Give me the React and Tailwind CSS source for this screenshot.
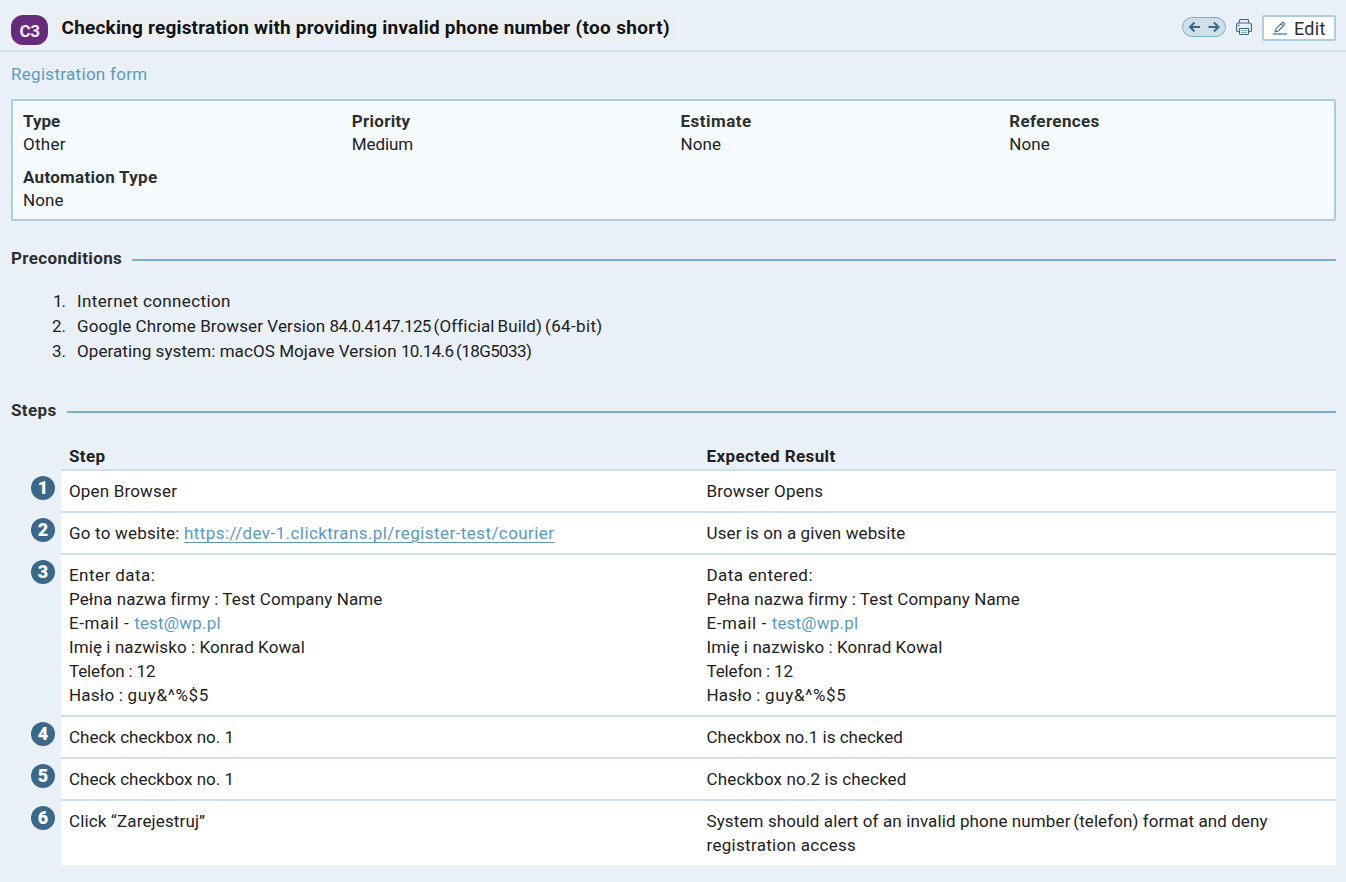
import React from "react";

const details = [
  { label: "Type", value: "Other", labelClass: "", valueClass: "tracking-[0.3px]" },
  { label: "Priority", value: "Medium", labelClass: "tracking-[0.3px]", valueClass: "tracking-[-0.1px]" },
  { label: "Estimate", value: "None", labelClass: "tracking-[0.5px]", valueClass: "tracking-[0.1px]" },
  { label: "References", value: "None", labelClass: "tracking-[0.38px]", valueClass: "tracking-[0.1px]" },
  { label: "Automation Type", value: "None", labelClass: "tracking-[0.28px]", valueClass: "tracking-[0.1px]" },
];

const preconditions = [
  <span className="tracking-[0.38px]">Internet connection</span>,
  <>
    <span className="tracking-[0.1px]">Google Chrome Browser Version </span>
    <span className="tracking-[-0.6px] [word-spacing:-1px]">84.0.4147.125 </span>
    <span className="tracking-[0.15px] [word-spacing:-1.5px]">(Official Build) </span>
    <span className="tracking-[0.35px]">(64-bit)</span>
  </>,
  <>
    <span className="tracking-[0.08px]">Operating system: macOS Mojave Version </span>
    <span className="tracking-[-0.6px] [word-spacing:-1px]">10.14.6 (18G5033)</span>
  </>,
];

function FormData({ title }) {
  return (
    <>
      <div className="tracking-[0.44px]">{title}</div>
      <div className="tracking-[0.1px]">Pełna nazwa firmy : Test Company Name</div>
      <div>
        <span className="tracking-[0.58px]">E-mail - </span>
        <a className="tracking-[0.2px] text-[#5c99c0]">test@wp.pl</a>
      </div>
      <div className="tracking-[0.09px]">Imię i nazwisko : Konrad Kowal</div>
      <div className="tracking-[-0.15px]">Telefon : 12</div>
      <div>
        <span className="tracking-[0.2px]">Hasło : </span>
        <span className="tracking-[0.65px]">guy&amp;^%$5</span>
      </div>
    </>
  );
}

const steps = [
  {
    step: <span className="tracking-[0.17px]">Open Browser</span>,
    expected: <span className="tracking-[0.15px]">Browser Opens</span>,
  },
  {
    step: (
      <>
        <span className="tracking-[0.2px]">Go to website: </span>
        <a className="tracking-[0.43px] text-[#5c99c0] underline decoration-1 underline-offset-3">
          https://dev-1.clicktrans.pl/register-test/courier
        </a>
      </>
    ),
    expected: <span className="tracking-[0.11px]">User is on a given website</span>,
  },
  { step: <FormData title="Enter data:" />, expected: <FormData title="Data entered:" /> },
  { step: "Check checkbox no. 1", expected: "Checkbox no.1 is checked" },
  {
    step: "Check checkbox no. 1",
    expected: <span className="tracking-[0.15px]">Checkbox no.2 is checked</span>,
  },
  {
    step: <span className="tracking-[0.13px]">Click “Zarejestruj”</span>,
    expected: (
      <>
        <div>
          <span className="tracking-[0.11px]">System should alert of an invalid phone number</span>
          <span className="tracking-[0.07px]">
            <span className="[word-spacing:-1.5px]"> </span>(telefon) format and deny
          </span>
        </div>
        <div className="tracking-[0.3px]">registration access</div>
      </>
    ),
  },
];

function SectionTitle({ children }) {
  return (
    <div className="flex h-6 items-center gap-[10px]">
      <h2 className="text-[17px] font-bold leading-6 tracking-[0.37px] text-[#2b2f31]">{children}</h2>
      <div className="mt-1 h-[2px] flex-1 bg-[#7badcf]" />
    </div>
  );
}

export default function App() {
  return (
    <div className="h-[882px] w-[1346px] overflow-hidden whitespace-nowrap bg-[#e9f0f7] font-['Roboto',sans-serif] text-[17px] leading-6 text-[#1e2122]">
      <header className="flex h-[52px] items-start border-b-2 border-[#d0e0eb] pl-[11px] pr-[10px]">
        <span className="mt-[15px] flex h-[30px] w-[37px] items-center justify-center rounded-[12px] bg-[#672b7c] pt-px text-[17px] font-bold tracking-[-0.4px] text-[#f3eaf6]">
          C3
        </span>
        <h1 className="ml-2 mt-[15px] h-6 bg-[#ebeff2] pl-[5.5px] pr-[5px] text-[19px] font-bold leading-[26px] tracking-[0.2px] text-[#111314]">
          Checking registration with providing invalid phone number{" "}
          <span className="tracking-[0.35px]">(too short)</span>
        </h1>
        <div className="ml-auto flex items-start">
          <div className="mt-[17px] flex h-5 w-11 items-center justify-center rounded-full border border-[#7badcf] bg-[#d0e0eb]">
            <svg className="h-[18px] w-[42px]" viewBox="0 0 42 18" fill="none" stroke="#3b6888" strokeWidth="2">
              <path d="M17 9H7.500M11.500 4.500 7 9l4.500 4.500M25.500 9h10M31 4.500 35.500 9 31 13.500" />
            </svg>
          </div>
          <svg className="ml-[10px] mt-[19px] h-4 w-4" viewBox="0 0 16 16" fill="none" stroke="#3b6888" strokeWidth="1.100">
            <path d="M3.500 4V1.500a1 1 0 0 1 1-1h7a1 1 0 0 1 1 1V4M3.500 12.500H1.600a1 1 0 0 1-1-1V6a2 2 0 0 1 2-2h10.800a2 2 0 0 1 2 2v5.500a1 1 0 0 1-1 1h-1.900" />
            <path d="M3.500 9.500h9v5a1 1 0 0 1-1 1h-7a1 1 0 0 1-1-1z" fill="#f6fbff" />
            <path d="M5 11.500h6M5 13.500h6" stroke="#7badcf" />
            <path d="M1.800 6.500h2M2.800 5.500v2" stroke="#35a878" strokeWidth="1" />
          </svg>
          <button className="ml-[10px] mt-[15px] flex h-[26px] w-[74px] items-center rounded-[2px] border-2 border-[#aecbdf] bg-white pl-[9px] text-[18px] leading-[22px] text-[#2b2f31]">
            <svg className="mr-[7px] h-[14px] w-[14px]" viewBox="0 0 14 14" fill="none" stroke="#3b6888" strokeWidth="1.100">
              <path d="m2.200 10.800.8-3.100L9 1.800a1.300 1.300 0 0 1 1.800 0l.5.500a1.300 1.300 0 0 1 0 1.800L5.300 10zM8 2.900l2.300 2.300" />
              <path d="M0 13h14" stroke="#7badcf" strokeWidth="2" />
            </svg>
            <span className="pt-[2px] tracking-[0.3px]">Edit</span>
          </button>
        </div>
      </header>

      <main className="pl-[11px] pr-[10px]">
        <div className="mt-[10px] tracking-[0.3px] text-[#5c99c0]">Registration form</div>

        <dl className="mt-[13px] grid h-[122px] grid-cols-4 content-start gap-x-[14px] gap-y-[10px] rounded-[2px] border-2 border-[#aecbdf] bg-[#f6fbff] px-[10px] pt-[9px] leading-[23px]">
          {details.map((item) => (
            <div key={item.label}>
              <dt className={`font-bold text-[#2b2f31] ${item.labelClass}`}>{item.label}</dt>
              <dd className={item.valueClass}>{item.value}</dd>
            </div>
          ))}
        </dl>

        <section className="mt-[25px]">
          <SectionTitle>Preconditions</SectionTitle>
          <ol className="mt-[19px] leading-[25px]">
            {preconditions.map((text, i) => (
              <li key={i} className="flex">
                <span
                  className={
                    i === 0
                      ? "mr-[11px] w-[55px] pr-px text-right tracking-[-1px]"
                      : "mr-[11px] w-[55px] text-right"
                  }
                >
                  {i + 1}.
                </span>
                <span>{text}</span>
              </li>
            ))}
          </ol>
        </section>

        <section className="mt-[34px]">
          <SectionTitle>Steps</SectionTitle>
          <div className="mt-[22px] ml-[50px] grid h-[27px] grid-cols-2 border-b-2 border-[#d0e0eb] font-bold tracking-[0.4px]">
            <div className="pl-2">Step</div>
            <div className="pl-2">Expected Result</div>
          </div>
          {steps.map((row, i) => (
            <div key={i} className="group flex">
              <div className="w-[50px] pl-5 pt-[5px]">
                <span className="flex h-6 w-6 items-center justify-center rounded-full bg-[#3b6888] text-[18px] font-black text-white">
                  {i + 1}
                </span>
              </div>
              <div className="grid flex-1 grid-cols-2 border-b-2 border-[#d0e0eb] bg-white py-2 group-last:border-b-0">
                <div className="pl-2">{row.step}</div>
                <div className="pl-2">{row.expected}</div>
              </div>
            </div>
          ))}
        </section>
      </main>
    </div>
  );
}
